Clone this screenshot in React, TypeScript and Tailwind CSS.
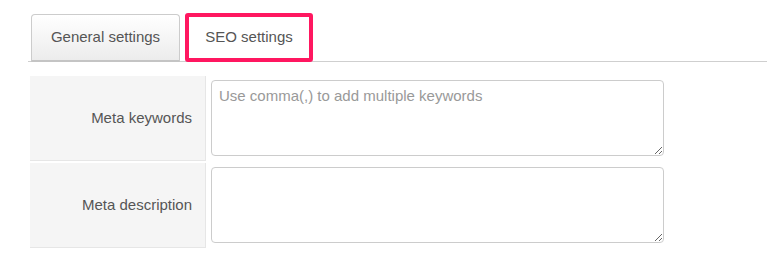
export default function App() {
  const rows = [
    { label: 'Meta keywords', placeholder: 'Use comma(,) to add multiple keywords' },
    { label: 'Meta description', placeholder: '' },
  ];

  return (
    <div className="w-[767px] h-[279px] bg-white pt-[13px] pl-[28px] font-['Liberation_Sans',Arial,sans-serif]">
      {/* Tabs */}
      <div className="flex items-end h-[49px] border-b border-[#cfcfcf]">
        <div className="ml-[3px] w-[149px] h-[48px] -mb-px flex items-center justify-center rounded-t-[4px] border border-[#cccccc] border-b-[#c4c4c4] border-b-2 bg-gradient-to-b from-white to-[#ececec] text-[15px] text-[#555]">
          General settings
        </div>
        <div className="ml-[5px] w-[128px] h-[49px] -mb-px flex items-center justify-center rounded-[3px] border-4 border-[#ff1760] bg-white text-[15px] text-[#555]">
          SEO settings
        </div>
      </div>

      {/* Form */}
      <div className="mt-[14px] ml-[2px] flex flex-col gap-[2px]">
        {rows.map((r) => (
          <div key={r.label} className="flex h-[85px]">
            <div className="w-[176px] flex items-center justify-end pr-[13px] bg-[#f5f5f5] border-b border-r border-[#e6e6e6] text-[15px] text-[#555]">
              {r.label}
            </div>
            <div className="pl-[5px] pt-[4px]">
              <textarea
                placeholder={r.placeholder}
                className="block w-[453px] h-[76px] rounded-[4px] border border-[#cccccc] bg-white px-[7px] py-[5px] text-[15px] leading-[20px] text-[#555] placeholder:text-[#999] outline-none font-['Liberation_Sans',Arial,sans-serif]"
              />
            </div>
          </div>
        ))}
      </div>
    </div>
  );
}
